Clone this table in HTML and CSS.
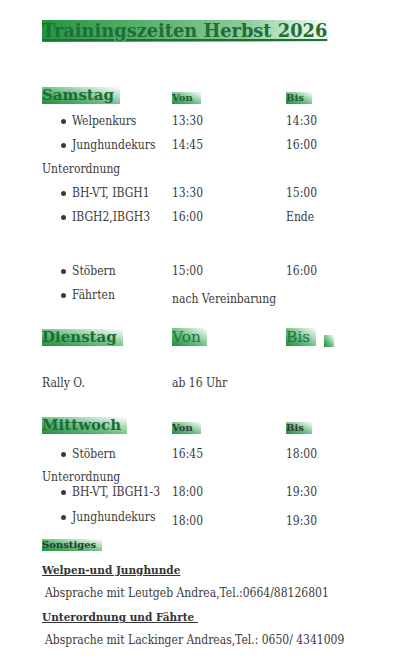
FILE: index.html
```html
<!DOCTYPE html>
<html lang="de">
<head>
  <meta charset="UTF-8">
  <meta name="viewport" content="width=device-width, initial-scale=1.0">
  <title>Trainingszeiten Herbst 2026</title>
  <link rel="stylesheet" href="styles.css">
</head>
<body>
  <div class="page">
    <h1 class="title"><span class="mark">Trainingszeiten Herbst 2026</span></h1>

    <!-- Samstag -->
    <div class="day day-first">
      <div class="row head">
        <span class="mark day-name">Samstag</span>
        <span class="mark col-head">Von</span>
        <span class="mark col-head">Bis</span>
      </div>
      <div class="row"><span class="item">Welpenkurs</span><span>13:30</span><span>14:30</span></div>
      <div class="row"><span class="item">Junghundekurs</span><span>14:45</span><span>16:00</span></div>
      <div class="row"><span>Unterordnung</span><span></span><span></span></div>
      <div class="row"><span class="item">BH-VT, IBGH1</span><span>13:30</span><span>15:00</span></div>
      <div class="row"><span class="item">IBGH2,IBGH3</span><span>16:00</span><span>Ende</span></div>
      <div class="row spacer"></div>
      <div class="row"><span class="item">Stöbern</span><span>15:00</span><span>16:00</span></div>
      <div class="row"><span class="item">Fährten</span><span class="low">nach Vereinbarung</span><span></span></div>
    </div>

    <!-- Dienstag -->
    <div class="day">
      <div class="row head">
        <span class="mark day-name">Dienstag</span>
        <span class="mark col-head plain">Von</span>
        <span class="bis-wrap"><span class="mark col-head plain">Bis</span><span class="mark chip"></span></span>
      </div>
      <div class="row rally"><span>Rally O.</span><span>ab 16 Uhr</span><span></span></div>
    </div>

    <!-- Mittwoch -->
    <div class="day">
      <div class="row head">
        <span class="mark day-name">Mittwoch</span>
        <span class="mark col-head dark">Von</span>
        <span class="mark col-head dark">Bis</span>
      </div>
      <div class="row r1"><span class="item">Stöbern</span><span>16:45</span><span>18:00</span></div>
      <div class="row r2"><span>Unterordnung</span><span></span><span></span></div>
      <div class="row r3"><span class="item">BH-VT, IBGH1-3</span><span>18:00</span><span>19:30</span></div>
      <div class="row r4"><span class="item">Junghundekurs</span><span class="low">18:00</span><span class="low">19:30</span></div>
    </div>

    <!-- Sonstiges -->
    <div class="other">
      <span class="mark other-head">Sonstiges</span>
      <p class="sub first">Welpen-und Junghunde</p>
      <p class="note">Absprache mit Leutgeb Andrea,Tel.:0664/88126801</p>
      <p class="sub">Unterordnung und Fährte&nbsp;</p>
      <p class="note">Absprache mit Lackinger Andreas,Tel.: 0650/ 4341009</p>
    </div>
  </div>
</body>
</html>
```

FILE: styles.css
```css
html, body {
  margin: 0;
  padding: 0;
  background: #fff;
}

body {
  font-family: "DejaVu Serif Condensed", "DejaVu Serif", serif;
  font-size: 12px;
  color: #3b3b3b;
}

.page {
  padding: 20px 0 0 42px;
  width: 368px;
  box-sizing: border-box;
}

/* grüner Verlauf hinter den Überschriften */
.mark {
  display: inline-block;
  background: linear-gradient(to top right, #1f8f3c 0%, #6cbd82 45%, #ffffff 100%);
}

.title {
  margin: 0;
  font-family: "DejaVu Serif", serif;
  font-size: 17.8px;
  line-height: 22px;
  font-weight: bold;
  color: #1e6e35;
}

.title .mark {
  padding-right: 6px;
  text-decoration: underline;
  text-decoration-thickness: 2px;
  text-underline-offset: 2px;
  background: linear-gradient(to right, #23963f 0%, #8bcb9b 70%, #ffffff 100%);
}

.day {
  margin-top: 21px;
}

.day-first {
  margin-top: 44px;
}

.row {
  display: grid;
  grid-template-columns: 130px 114px auto;
  align-items: center;
  height: 24px;
}

.row.head {
  height: 18px;
  align-items: end;
  margin-bottom: 5px;
}

.day-name {
  font-family: "DejaVu Serif", serif;
  font-size: 15px;
  line-height: 17px;
  font-weight: bold;
  color: #1d6c34;
  justify-self: start;
  padding-right: 6px;
}

.col-head {
  font-family: "DejaVu Serif", serif;
  font-size: 10px;
  line-height: 12px;
  font-weight: bold;
  color: #1d5c2f;
  justify-self: start;
  padding-right: 8px;
}

.col-head.plain {
  font-size: 15.5px;
  line-height: 18px;
  font-weight: normal;
  color: #21753a;
  padding-right: 6px;
}

.col-head.dark {
  color: #2e3a31;
}

.bis-wrap {
  display: flex;
  align-items: flex-end;
  gap: 8px;
}

.chip {
  width: 10px;
  height: 12px;
  margin-bottom: -1px;
}

.item {
  position: relative;
  padding-left: 30px;
}

.item::before {
  content: "";
  position: absolute;
  left: 19px;
  top: 50%;
  width: 5px;
  height: 5px;
  margin-top: -2px;
  border-radius: 50%;
  background: #3b3b3b;
}

.low {
  position: relative;
  top: 4px;
}

.row.spacer {
  height: 30px;
}

.rally {
  margin-top: 25px;
}

.row.r1 {
  height: 30px;
}

.row.r2 {
  height: 16px;
}

.row.r3 {
  height: 14px;
}

.row.r4 {
  height: 36px;
}

.other {
  margin-top: 2px;
}

.other-head {
  font-family: "DejaVu Serif", serif;
  font-size: 10px;
  line-height: 12px;
  font-weight: bold;
  color: #2d3a30;
  padding-right: 6px;
}

.sub {
  margin: 10px 0 0;
  font-family: "DejaVu Serif", serif;
  font-size: 10.5px;
  line-height: 14px;
  font-weight: bold;
  text-decoration: underline;
  color: #333;
}

.sub.first {
  margin-top: 12px;
}

.note {
  margin: 9px 0 0 3px;
  line-height: 14px;
  color: #3b3b3b;
}
```
